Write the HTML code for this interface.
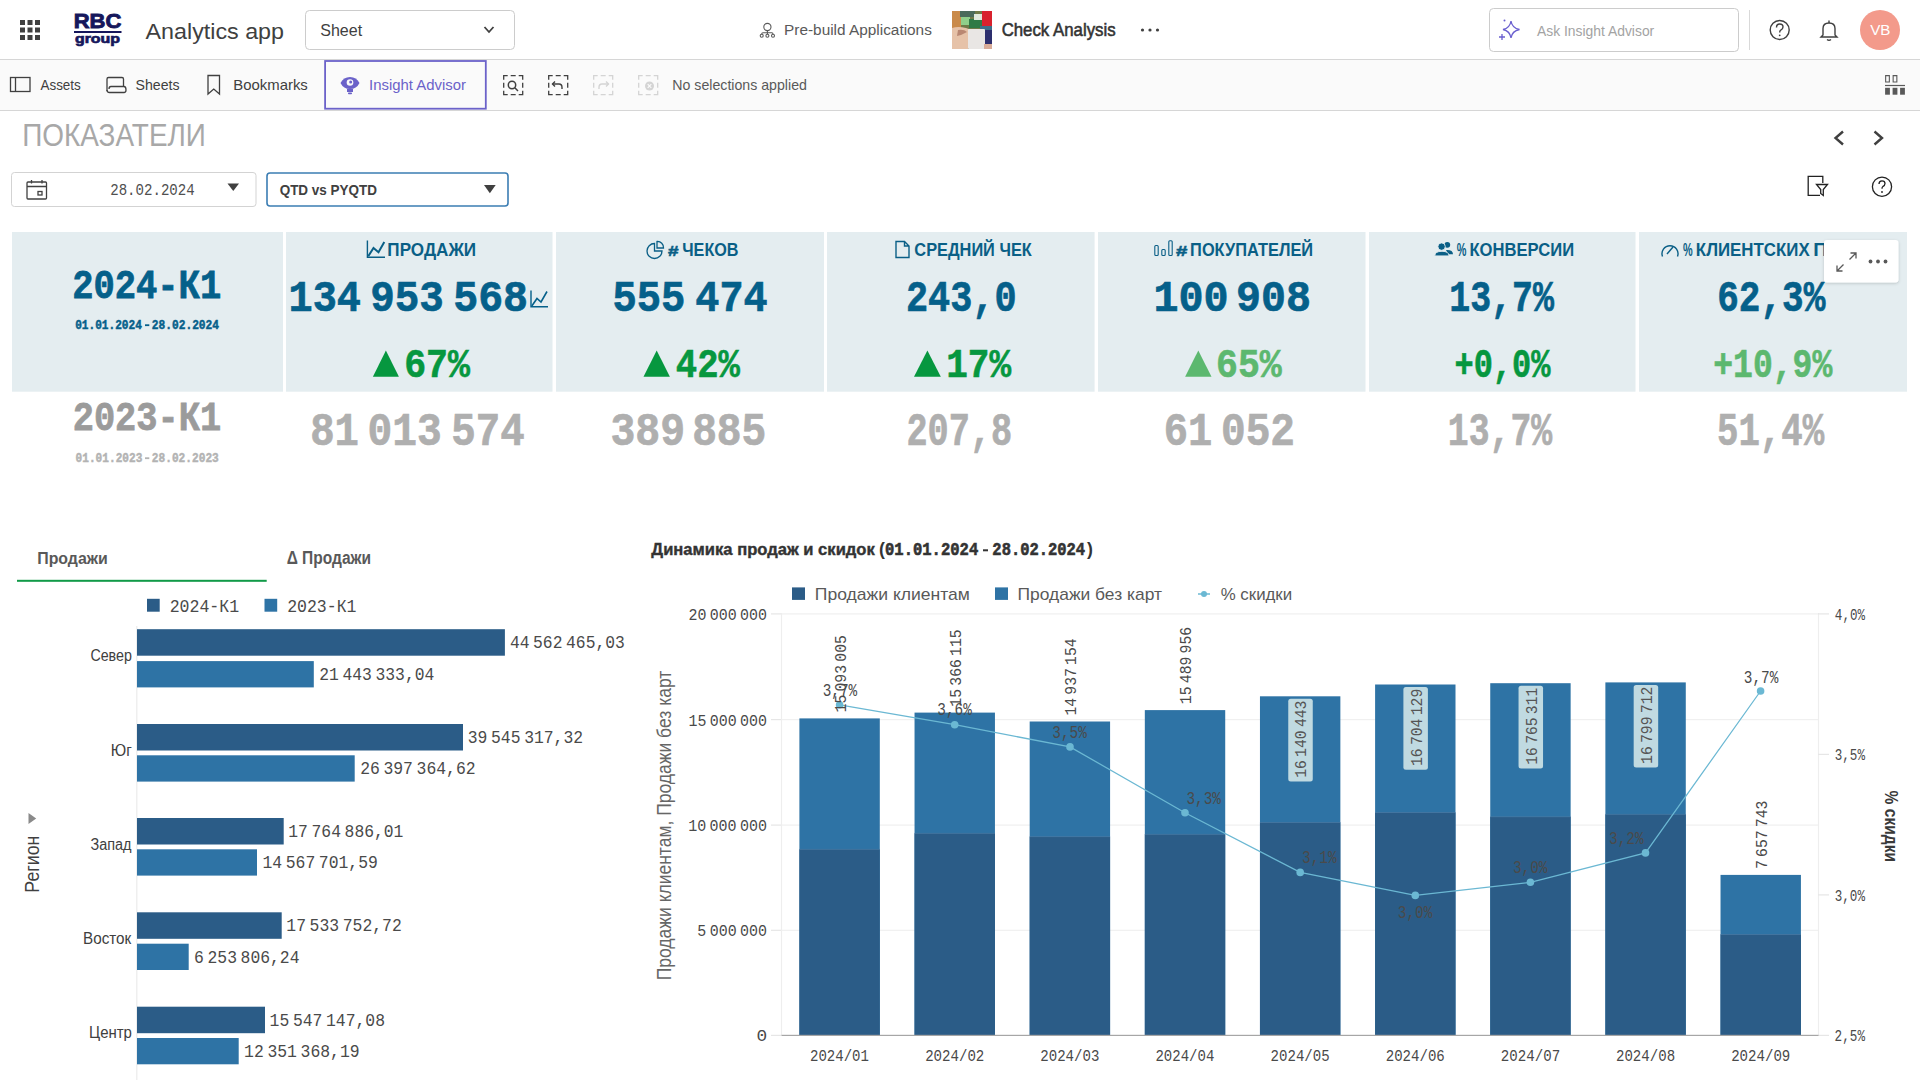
<!DOCTYPE html>
<html><head><meta charset="utf-8"><title>Analytics app</title>
<style>
*{margin:0;padding:0;box-sizing:border-box}
html,body{width:1920px;height:1080px;overflow:hidden;background:#fff;font-family:"Liberation Sans",sans-serif}
svg{position:absolute;left:0;top:0;display:block}
text{white-space:pre}
</style></head><body>
<svg width="1920" height="1080" viewBox="0 0 1920 1080">
<rect x="0" y="0" width="1920" height="59" fill="#fff"/>
<rect x="0" y="59" width="1920" height="1" fill="#d6d6d6"/>
<rect x="0" y="60" width="1920" height="50" fill="#fafafa"/>
<rect x="0" y="110" width="1920" height="1" fill="#d6d6d6"/>
<rect x="20.0" y="20.0" width="5" height="5" fill="#404040"/>
<rect x="20.0" y="27.5" width="5" height="5" fill="#404040"/>
<rect x="20.0" y="35.0" width="5" height="5" fill="#404040"/>
<rect x="27.5" y="20.0" width="5" height="5" fill="#404040"/>
<rect x="27.5" y="27.5" width="5" height="5" fill="#404040"/>
<rect x="27.5" y="35.0" width="5" height="5" fill="#404040"/>
<rect x="35.0" y="20.0" width="5" height="5" fill="#404040"/>
<rect x="35.0" y="27.5" width="5" height="5" fill="#404040"/>
<rect x="35.0" y="35.0" width="5" height="5" fill="#404040"/>
<text x="73.73" y="28.40" font-family="Liberation Sans" font-weight="bold" font-size="21.08" fill="#16175c" textLength="47.67" lengthAdjust="spacingAndGlyphs" stroke="#16175c" stroke-width="0.9">RBC</text>
<rect x="74" y="31" width="47.5" height="2" fill="#16175c"/>
<text x="74.95" y="42.60" font-family="Liberation Sans" font-weight="bold" font-size="13.52" fill="#16175c" textLength="45.11" lengthAdjust="spacingAndGlyphs" stroke="#16175c" stroke-width="0.7">group</text>
<text x="145.55" y="38.75" font-family="Liberation Sans" font-weight="normal" font-size="22.75" fill="#404040" textLength="138.42" lengthAdjust="spacingAndGlyphs" >Analytics app</text>
<rect x="305.5" y="10.5" width="209" height="39" rx="4" fill="#fff" stroke="#cccccc"/>
<text x="320.27" y="35.80" font-family="Liberation Sans" font-weight="normal" font-size="15.84" fill="#404040" textLength="41.84" lengthAdjust="spacingAndGlyphs" >Sheet</text>
<path d="M484.5 27 L489 32 L493.5 27" stroke="#404040" stroke-width="1.8" fill="none"/>
<g fill="none" stroke="#595959" stroke-width="1.1"><circle cx="767.4" cy="27" r="3.6"/><path d="M767.4 30.6 V32.8 M761.7 34.2 Q761.7 32.8 763 32.8 H771.8 Q773 32.8 773 34.2 M767.4 32.8 V34.2"/><circle cx="761.7" cy="35.7" r="1.5"/><circle cx="767.4" cy="35.7" r="1.5"/><circle cx="773" cy="35.7" r="1.5"/></g>
<text x="784.05" y="34.75" font-family="Liberation Sans" font-weight="normal" font-size="14.03" fill="#595959" textLength="147.81" lengthAdjust="spacingAndGlyphs" >Pre-build Applications</text>
<clipPath id="thc"><rect x="952" y="11" width="40" height="38"/></clipPath>
<g clip-path="url(#thc)"><rect x="952" y="11" width="40" height="38" fill="#6f7a48"/><rect x="952" y="11" width="9" height="17" fill="#c98a4a"/><rect x="960" y="11" width="15" height="6" fill="#4a6a5a"/><rect x="961" y="17" width="9" height="8" fill="#8fcf8a"/><rect x="969" y="19" width="13" height="9" fill="#2f7a45"/><rect x="974" y="14" width="8" height="6" fill="#dfe8dc"/><rect x="982" y="11" width="10" height="17" fill="#d8222e"/><rect x="980" y="26" width="12" height="6" fill="#3d6f8a"/><rect x="984" y="30" width="8" height="15" fill="#2d2f6e"/><rect x="952" y="43" width="10" height="6" fill="#2e8a35"/><path d="M952 28 Q958 26 966 28 Q974 30 974 36 L968 49 H952 Z" fill="#e6c2a8"/><rect x="968" y="29" width="17" height="20" rx="1" fill="#e9e6e4"/><path d="M958 30 Q964 29 967 32 Q962 35 957 36 Z" fill="#b98772"/><rect x="984" y="44" width="8" height="5" fill="#d8ab98"/></g>
<text x="1001.65" y="35.90" font-family="Liberation Sans" font-weight="normal" font-size="18.17" fill="#333333" textLength="113.95" lengthAdjust="spacingAndGlyphs" stroke="#333333" stroke-width="0.55">Check Analysis</text>
<circle cx="1142.5" cy="30" r="1.6" fill="#404040"/>
<circle cx="1150" cy="30" r="1.6" fill="#404040"/>
<circle cx="1157.5" cy="30" r="1.6" fill="#404040"/>
<rect x="1489.5" y="8.5" width="249" height="43" rx="4" fill="#fff" stroke="#cccccc"/>
<g fill="none" stroke="#6a5fcf" stroke-width="1.3"><path d="M1511 21 Q1512 28 1519.5 29.5 Q1512 31 1511 38 Q1510 31 1503 29.5 Q1510 28 1511 21 Z"/><path d="M1502 34 V40 M1499 37 H1505"/></g><circle cx="1504.5" cy="20.5" r="1" fill="#6a5fcf"/>
<text x="1536.97" y="35.90" font-family="Liberation Sans" font-weight="normal" font-size="14.54" fill="#a3a3a3" textLength="117.26" lengthAdjust="spacingAndGlyphs" >Ask Insight Advisor</text>
<rect x="1749" y="10" width="1" height="40" fill="#d9d9d9"/>
<g fill="none" stroke="#404040" stroke-width="1.4"><circle cx="1779.7" cy="30" r="9.5"/><path d="M1776.5 27.5 Q1776.5 24 1779.7 24 Q1783 24 1783 27 Q1783 29 1780.5 30.3 Q1779.7 30.8 1779.7 32.5"/></g><circle cx="1779.7" cy="35.3" r="0.9" fill="#404040"/>
<g fill="none" stroke="#404040" stroke-width="1.4"><path d="M1823 35 V28.5 Q1823 23 1829 23 Q1835 23 1835 28.5 V35 L1837 37 H1821 Z"/><path d="M1827 39.5 Q1829 41 1831 39.5"/><path d="M1829 20.5 V23"/></g>
<circle cx="1880" cy="30" r="20" fill="#f39a8b"/>
<text x="1870.23" y="34.80" font-family="Liberation Sans" font-weight="normal" font-size="14.39" fill="#ffffff" textLength="20.27" lengthAdjust="spacingAndGlyphs" >VB</text>
<g fill="none" stroke="#404040" stroke-width="1.3"><rect x="10.5" y="77.5" width="19.5" height="14"/><path d="M15.5 77.5 V91.5"/></g>
<text x="40.47" y="89.80" font-family="Liberation Sans" font-weight="normal" font-size="14.54" fill="#404040" textLength="40.31" lengthAdjust="spacingAndGlyphs" >Assets</text>
<g fill="none" stroke="#404040" stroke-width="1.3"><path d="M107 91 V79 Q107 77.5 108.5 77.5 H122 Q123.5 77.5 123.5 79 V86"/><path d="M107 90 Q107 92.5 109.5 92.5 H124 Q126 92.5 126 90 Q126 86.5 124 86.5 H111 Q109 86.5 109 89"/></g>
<text x="135.56" y="89.80" font-family="Liberation Sans" font-weight="normal" font-size="14.54" fill="#404040" textLength="43.95" lengthAdjust="spacingAndGlyphs" >Sheets</text>
<path d="M208 75.5 H219.5 V94 L213.75 89 L208 94 Z" fill="none" stroke="#404040" stroke-width="1.3"/>
<text x="233.28" y="89.80" font-family="Liberation Sans" font-weight="normal" font-size="14.54" fill="#404040" textLength="74.56" lengthAdjust="spacingAndGlyphs" >Bookmarks</text>
<rect x="325.1" y="61" width="160.7" height="47.7" fill="none" stroke="#6b62c9" stroke-width="1.8"/>
<path d="M350 77 Q343.5 77 340.5 83 Q343.5 89 350 89 Q356.5 89 359.5 83 Q356.5 77 350 77 Z" fill="#6b62c9"/><circle cx="350" cy="82.5" r="3.3" fill="#fafafa"/><circle cx="350.7" cy="82" r="1.5" fill="#6b62c9"/><rect x="347" y="89" width="6" height="3" fill="#6b62c9"/><rect x="348" y="92.5" width="4" height="1.8" rx="0.8" fill="#6b62c9"/>
<text x="369.14" y="89.80" font-family="Liberation Sans" font-weight="normal" font-size="14.54" fill="#6b62c9" textLength="96.81" lengthAdjust="spacingAndGlyphs" >Insight Advisor</text>
<rect x="503.7" y="75.7" width="19" height="19" fill="none" stroke="#404040" stroke-width="1.3" stroke-dasharray="8 3 5 3" stroke-dashoffset="4"/>
<g fill="none" stroke="#404040" stroke-width="1.5"><circle cx="512" cy="85" r="3.7"/><path d="M514.8 87.8 L518 91"/></g>
<rect x="548.7" y="75.7" width="19" height="19" fill="none" stroke="#404040" stroke-width="1.3" stroke-dasharray="8 3 5 3" stroke-dashoffset="4"/>
<g fill="none" stroke="#404040" stroke-width="1.4"><path d="M555 81.5 L552.5 84 L555 86.5"/><path d="M552.5 84 H559 Q562 84 562 87.5 V89"/></g>
<rect x="593.7" y="75.7" width="19" height="19" fill="none" stroke="#d4d4d4" stroke-width="1.3" stroke-dasharray="8 3 5 3" stroke-dashoffset="4"/>
<g fill="none" stroke="#d4d4d4" stroke-width="1.4"><path d="M606 81.5 L608.5 84 L606 86.5"/><path d="M608.5 84 H602 Q599 84 599 87.5 V89"/></g>
<rect x="638.7" y="75.7" width="19" height="19" fill="none" stroke="#d4d4d4" stroke-width="1.3" stroke-dasharray="8 3 5 3" stroke-dashoffset="4"/>
<circle cx="649.5" cy="86" r="4.5" fill="#d4d4d4"/><path d="M647.7 84.2 L651.3 87.8 M651.3 84.2 L647.7 87.8" stroke="#fafafa" stroke-width="1.2"/>
<text x="672.34" y="89.80" font-family="Liberation Sans" font-weight="normal" font-size="14.54" fill="#595959" textLength="134.57" lengthAdjust="spacingAndGlyphs" >No selections applied</text>
<g fill="#595959"><path fill-rule="evenodd" d="M1885.1 75.1 H1889.9 V82.5 H1885.1 Z M1886.2 76.2 V81.4 H1888.8 V76.2 Z M1892.6 75.1 H1897.4 V82.5 H1892.6 Z M1893.7 76.2 V81.4 H1896.3 V76.2 Z"/><rect x="1885" y="84.9" width="20" height="1.2"/><rect x="1885.1" y="87.8" width="4.8" height="6.9"/><rect x="1892.6" y="87.8" width="4.8" height="6.9"/><rect x="1900.1" y="87.8" width="4.8" height="6.9"/></g>
<text x="22.17" y="145.90" font-family="Liberation Sans" font-weight="normal" font-size="31.11" fill="#a8a8a8" textLength="183.79" lengthAdjust="spacingAndGlyphs" >ПОКАЗАТЕЛИ</text>
<path d="M1843 131.5 L1835.5 138 L1843 144.5" fill="none" stroke="#404040" stroke-width="2.4"/>
<path d="M1874.5 131.5 L1882 138 L1874.5 144.5" fill="none" stroke="#404040" stroke-width="2.4"/>
<rect x="11.5" y="172.5" width="244.5" height="34" rx="3" fill="#fff" stroke="#d3d3d3"/>
<g fill="none" stroke="#404040" stroke-width="1.3"><rect x="27" y="182" width="19.5" height="17" rx="1"/><path d="M27 186.5 H46.5 M31.5 180 V183.5 M42 180 V183.5"/><rect x="38" y="191.5" width="4" height="3.5"/></g>
<text x="110.21" y="194.70" font-family="Liberation Mono" font-weight="normal" font-size="17.31" fill="#505050" textLength="84.51" lengthAdjust="spacingAndGlyphs" >28.02.2024</text>
<path d="M227.5 183.5 H239 L233.25 191 Z" fill="#404040"/>
<rect x="267" y="173" width="241" height="33" rx="3" fill="#fff" stroke="#3b7db3" stroke-width="1.6"/>
<text x="279.65" y="195.40" font-family="Liberation Sans" font-weight="bold" font-size="14.83" fill="#404040" textLength="97.42" lengthAdjust="spacingAndGlyphs" >QTD vs PYQTD</text>
<path d="M484 185 H495.7 L489.85 193.3 Z" fill="#404040"/>
<g fill="none" stroke="#222" stroke-width="1.3"><path d="M1820 195.3 H1808.2 V176.4 H1822.8 V183"/><path d="M1816.5 184.5 H1827.5 L1823.3 189.5 V195.5 L1820.7 193.5 V189.5 Z"/></g>
<g fill="none" stroke="#222" stroke-width="1.3"><circle cx="1882" cy="186.7" r="9.6"/><path d="M1879 184 Q1879 180.8 1882 180.8 Q1885 180.8 1885 183.6 Q1885 185.5 1882.7 186.7 Q1882 187.2 1882 188.8"/></g><circle cx="1882" cy="192" r="0.9" fill="#222"/>
<rect x="12" y="232" width="271.0" height="159.7" fill="#e4edf0"/>
<rect x="286" y="232" width="266.5" height="159.7" fill="#e4edf0"/>
<rect x="556" y="232" width="268.0" height="159.7" fill="#e4edf0"/>
<rect x="827" y="232" width="267.6" height="159.7" fill="#e4edf0"/>
<rect x="1098" y="232" width="267.5" height="159.7" fill="#e4edf0"/>
<rect x="1369" y="232" width="266.5" height="159.7" fill="#e4edf0"/>
<rect x="1639" y="232" width="268.0" height="159.7" fill="#e4edf0"/>
<text x="72.17" y="298.00" font-family="Liberation Mono" font-weight="bold" font-size="40.53" fill="#05608a" textLength="149.04" lengthAdjust="spacingAndGlyphs" stroke="#05608a" stroke-width="0.8">2024-К1</text>
<text x="75.17" y="329.00" font-family="Liberation Mono" font-weight="bold" font-size="13.66" fill="#05608a" textLength="66.67" lengthAdjust="spacingAndGlyphs" stroke="#05608a" stroke-width="0.5">01.01.2024</text>
<rect x="145" y="324.3" width="4.3" height="1.8" fill="#05608a"/>
<text x="151.83" y="329.00" font-family="Liberation Mono" font-weight="bold" font-size="13.66" fill="#05608a" textLength="67.21" lengthAdjust="spacingAndGlyphs" stroke="#05608a" stroke-width="0.5">28.02.2024</text>
<text x="72.68" y="430.00" font-family="Liberation Mono" font-weight="bold" font-size="40.53" fill="#9b9b9b" textLength="148.53" lengthAdjust="spacingAndGlyphs" stroke="#9b9b9b" stroke-width="0.8">2023-К1</text>
<text x="75.62" y="462.00" font-family="Liberation Mono" font-weight="bold" font-size="13.66" fill="#b3b3b3" textLength="66.70" lengthAdjust="spacingAndGlyphs" stroke="#b3b3b3" stroke-width="0.5">01.01.2023</text>
<rect x="145" y="457.3" width="4.3" height="1.8" fill="#b3b3b3"/>
<text x="151.83" y="462.00" font-family="Liberation Mono" font-weight="bold" font-size="13.66" fill="#b3b3b3" textLength="66.99" lengthAdjust="spacingAndGlyphs" stroke="#b3b3b3" stroke-width="0.5">28.02.2023</text>
<text x="387.36" y="256.20" font-family="Liberation Sans" font-weight="bold" font-size="18.75" fill="#0a5f86" textLength="88.78" lengthAdjust="spacingAndGlyphs" >ПРОДАЖИ</text>
<text x="667.98" y="256.00" font-family="Liberation Sans" font-weight="bold" font-size="14.24" fill="#0a5f86" textLength="10.53" lengthAdjust="spacingAndGlyphs" stroke="#0a5f86" stroke-width="0.5">#</text>
<text x="682.23" y="256.20" font-family="Liberation Sans" font-weight="bold" font-size="18.75" fill="#0a5f86" textLength="56.30" lengthAdjust="spacingAndGlyphs" >ЧЕКОВ</text>
<text x="914.33" y="256.20" font-family="Liberation Sans" font-weight="bold" font-size="18.75" fill="#0a5f86" textLength="117.45" lengthAdjust="spacingAndGlyphs" >СРЕДНИЙ ЧЕК</text>
<text x="1176.05" y="255.80" font-family="Liberation Sans" font-weight="bold" font-size="14.83" fill="#0a5f86" textLength="11.38" lengthAdjust="spacingAndGlyphs" stroke="#0a5f86" stroke-width="0.5">#</text>
<text x="1190.11" y="256.20" font-family="Liberation Sans" font-weight="bold" font-size="18.75" fill="#0a5f86" textLength="122.98" lengthAdjust="spacingAndGlyphs" >ПОКУПАТЕЛЕЙ</text>
<text x="1456.73" y="256.20" font-family="Liberation Sans" font-weight="bold" font-size="18.75" fill="#0a5f86" textLength="9.66" lengthAdjust="spacingAndGlyphs" >%</text>
<text x="1469.49" y="256.20" font-family="Liberation Sans" font-weight="bold" font-size="18.75" fill="#0a5f86" textLength="104.61" lengthAdjust="spacingAndGlyphs" >КОНВЕРСИИ</text>
<text x="1683.03" y="256.20" font-family="Liberation Sans" font-weight="bold" font-size="18.75" fill="#0a5f86" textLength="9.66" lengthAdjust="spacingAndGlyphs" >%</text>
<text x="1695.87" y="256.20" font-family="Liberation Sans" font-weight="bold" font-size="18.75" fill="#0a5f86" textLength="113.78" lengthAdjust="spacingAndGlyphs" >КЛИЕНТСКИХ</text>
<text x="1813.18" y="256.20" font-family="Liberation Sans" font-weight="bold" font-size="18.75" fill="#0a5f86" textLength="14.13" lengthAdjust="spacingAndGlyphs" >П</text>
<g fill="none" stroke="#0a5f86"><path d="M367.4 240.5 V257.2 H385" stroke-width="1.4"/><path d="M368.2 256.3 L373.5 248 L378.5 252.3 L384.3 242" stroke-width="2"/></g>
<g fill="none" stroke="#0a5f86" stroke-width="1.3"><path d="M654.5 243.5 A7.5 7.5 0 1 0 662 251 H654.5 Z"/><path d="M657 241.5 A6 6 0 0 1 663.5 248 H657 Z"/></g>
<path d="M896 241.5 H904.5 L909 246 V257.5 H896 Z M904.5 241.5 V246 H909" fill="none" stroke="#0a5f86" stroke-width="1.4"/>
<g fill="none" stroke="#0a5f86" stroke-width="1.1"><rect x="1154.8" y="245.5" width="3.4" height="10" rx="1"/><rect x="1161.8" y="249.5" width="3.4" height="6" rx="1"/><rect x="1168.8" y="240.8" width="3.4" height="14.7" rx="1"/></g>
<g fill="#0a5f86"><circle cx="1447.3" cy="244.8" r="2.9"/><path d="M1446 250 Q1453 249.5 1453 254.3 H1448 Z"/><circle cx="1441.6" cy="246.6" r="3.7" stroke="#e4edf0" stroke-width="0.9"/><path d="M1434.8 255.9 Q1434.8 251.3 1442 251.3 Q1449 251.3 1449 255.9 Z" stroke="#e4edf0" stroke-width="0.9"/></g>
<g fill="none" stroke="#0a5f86" stroke-width="1.4"><path d="M1662.5 256.5 A8 8 0 1 1 1677.5 256.5"/><path d="M1667 254 L1673 247"/></g>
<text x="288.54" y="310.95" font-family="Liberation Mono" font-weight="bold" font-size="45.09" fill="#05608a" textLength="72.51" lengthAdjust="spacingAndGlyphs" stroke="#05608a" stroke-width="0.7">134</text>
<text x="370.27" y="310.95" font-family="Liberation Mono" font-weight="bold" font-size="45.09" fill="#05608a" textLength="73.65" lengthAdjust="spacingAndGlyphs" stroke="#05608a" stroke-width="0.7">953</text>
<text x="453.24" y="310.95" font-family="Liberation Mono" font-weight="bold" font-size="45.09" fill="#05608a" textLength="74.82" lengthAdjust="spacingAndGlyphs" stroke="#05608a" stroke-width="0.7">568</text>
<g fill="none" stroke="#05608a" stroke-width="1.4"><path d="M531 290.5 V306.8 H548"/><path d="M531.8 306 L537 298.5 L541 302 L547 291.5" stroke-width="1.6"/></g>
<text x="612.50" y="310.95" font-family="Liberation Mono" font-weight="bold" font-size="45.09" fill="#05608a" textLength="72.85" lengthAdjust="spacingAndGlyphs" stroke="#05608a" stroke-width="0.7">555</text>
<text x="695.26" y="310.95" font-family="Liberation Mono" font-weight="bold" font-size="45.09" fill="#05608a" textLength="72.39" lengthAdjust="spacingAndGlyphs" stroke="#05608a" stroke-width="0.7">474</text>
<text x="905.94" y="310.95" font-family="Liberation Mono" font-weight="bold" font-size="45.09" fill="#05608a" textLength="110.64" lengthAdjust="spacingAndGlyphs" stroke="#05608a" stroke-width="0.7">243,0</text>
<text x="1153.54" y="310.95" font-family="Liberation Mono" font-weight="bold" font-size="45.09" fill="#05608a" textLength="75.12" lengthAdjust="spacingAndGlyphs" stroke="#05608a" stroke-width="0.7">100</text>
<text x="1236.03" y="310.95" font-family="Liberation Mono" font-weight="bold" font-size="45.09" fill="#05608a" textLength="74.93" lengthAdjust="spacingAndGlyphs" stroke="#05608a" stroke-width="0.7">908</text>
<text x="1449.20" y="310.95" font-family="Liberation Mono" font-weight="bold" font-size="45.09" fill="#05608a" textLength="104.74" lengthAdjust="spacingAndGlyphs" stroke="#05608a" stroke-width="0.7">13,7%</text>
<text x="1717.15" y="310.95" font-family="Liberation Mono" font-weight="bold" font-size="45.09" fill="#05608a" textLength="108.18" lengthAdjust="spacingAndGlyphs" stroke="#05608a" stroke-width="0.7">62,3%</text>
<path d="M372.9 376.8 L385.90 350.6 L398.9 376.8 Z" fill="#06973f"/>
<text x="404.17" y="376.50" font-family="Liberation Mono" font-weight="bold" font-size="39.78" fill="#06973f" textLength="65.81" lengthAdjust="spacingAndGlyphs" stroke="#06973f" stroke-width="0.6">67%</text>
<path d="M643.5 376.8 L656.70 350.6 L669.9 376.8 Z" fill="#06973f"/>
<text x="675.87" y="376.50" font-family="Liberation Mono" font-weight="bold" font-size="39.78" fill="#06973f" textLength="64.12" lengthAdjust="spacingAndGlyphs" stroke="#06973f" stroke-width="0.6">42%</text>
<path d="M914 376.8 L927.40 350.6 L940.8 376.8 Z" fill="#06973f"/>
<text x="946.17" y="376.50" font-family="Liberation Mono" font-weight="bold" font-size="39.78" fill="#06973f" textLength="64.91" lengthAdjust="spacingAndGlyphs" stroke="#06973f" stroke-width="0.6">17%</text>
<path d="M1185.1 376.8 L1198.30 350.6 L1211.5 376.8 Z" fill="#5cb86f"/>
<text x="1216.07" y="376.50" font-family="Liberation Mono" font-weight="bold" font-size="39.78" fill="#5cb86f" textLength="65.71" lengthAdjust="spacingAndGlyphs" stroke="#5cb86f" stroke-width="0.6">65%</text>
<text x="1454.52" y="376.50" font-family="Liberation Mono" font-weight="bold" font-size="39.78" fill="#06973f" textLength="95.86" lengthAdjust="spacingAndGlyphs" stroke="#06973f" stroke-width="0.6">+0,0%</text>
<text x="1713.27" y="376.50" font-family="Liberation Mono" font-weight="bold" font-size="39.78" fill="#5cb86f" textLength="119.01" lengthAdjust="spacingAndGlyphs" stroke="#5cb86f" stroke-width="0.6">+10,9%</text>
<text x="310.19" y="444.65" font-family="Liberation Mono" font-weight="bold" font-size="45.70" fill="#afafaf" textLength="48.68" lengthAdjust="spacingAndGlyphs" stroke="#afafaf" stroke-width="0.7">81</text>
<text x="367.49" y="444.65" font-family="Liberation Mono" font-weight="bold" font-size="45.70" fill="#afafaf" textLength="74.25" lengthAdjust="spacingAndGlyphs" stroke="#afafaf" stroke-width="0.7">013</text>
<text x="451.28" y="444.65" font-family="Liberation Mono" font-weight="bold" font-size="45.70" fill="#afafaf" textLength="73.33" lengthAdjust="spacingAndGlyphs" stroke="#afafaf" stroke-width="0.7">574</text>
<text x="610.47" y="444.65" font-family="Liberation Mono" font-weight="bold" font-size="45.70" fill="#afafaf" textLength="74.67" lengthAdjust="spacingAndGlyphs" stroke="#afafaf" stroke-width="0.7">389</text>
<text x="692.16" y="444.65" font-family="Liberation Mono" font-weight="bold" font-size="45.70" fill="#afafaf" textLength="74.12" lengthAdjust="spacingAndGlyphs" stroke="#afafaf" stroke-width="0.7">885</text>
<text x="906.43" y="444.65" font-family="Liberation Mono" font-weight="bold" font-size="45.70" fill="#afafaf" textLength="105.79" lengthAdjust="spacingAndGlyphs" stroke="#afafaf" stroke-width="0.7">207,8</text>
<text x="1163.78" y="444.65" font-family="Liberation Mono" font-weight="bold" font-size="45.70" fill="#afafaf" textLength="48.59" lengthAdjust="spacingAndGlyphs" stroke="#afafaf" stroke-width="0.7">61</text>
<text x="1221.00" y="444.65" font-family="Liberation Mono" font-weight="bold" font-size="45.70" fill="#afafaf" textLength="74.06" lengthAdjust="spacingAndGlyphs" stroke="#afafaf" stroke-width="0.7">052</text>
<text x="1447.81" y="444.65" font-family="Liberation Mono" font-weight="bold" font-size="45.70" fill="#afafaf" textLength="104.33" lengthAdjust="spacingAndGlyphs" stroke="#afafaf" stroke-width="0.7">13,7%</text>
<text x="1717.04" y="444.65" font-family="Liberation Mono" font-weight="bold" font-size="45.70" fill="#afafaf" textLength="107.10" lengthAdjust="spacingAndGlyphs" stroke="#afafaf" stroke-width="0.7">51,4%</text>
<defs><filter id="sh" x="-20%" y="-20%" width="140%" height="160%"><feDropShadow dx="0" dy="1" stdDeviation="1.5" flood-color="#000" flood-opacity="0.18"/></filter></defs>
<rect x="1824" y="240" width="74.5" height="42.5" rx="3" fill="#fff" filter="url(#sh)"/>
<g fill="none" stroke="#595959" stroke-width="1.3"><path d="M1837 271 L1843.5 264.5 M1837 265.5 V271 H1842.5"/><path d="M1856 253 L1849.5 259.5 M1850.5 253 H1856 V258.5"/></g>
<circle cx="1870.5" cy="261.5" r="1.9" fill="#595959"/>
<circle cx="1878" cy="261.5" r="1.9" fill="#595959"/>
<circle cx="1885.5" cy="261.5" r="1.9" fill="#595959"/>
<text x="37.24" y="564.20" font-family="Liberation Sans" font-weight="bold" font-size="17.01" fill="#595959" textLength="70.56" lengthAdjust="spacingAndGlyphs" >Продажи</text>
<text x="286.67" y="564.30" font-family="Liberation Sans" font-weight="bold" font-size="17.44" fill="#595959" textLength="84.40" lengthAdjust="spacingAndGlyphs" >Δ Продажи</text>
<rect x="17" y="579.8" width="249.7" height="2" fill="#119a48"/>
<rect x="147" y="598.8" width="12.7" height="12.9" fill="#2b5c87"/>
<text x="169.64" y="612.20" font-family="Liberation Mono" font-weight="normal" font-size="18.98" fill="#4a4a4a" textLength="69.46" lengthAdjust="spacingAndGlyphs" >2024-К1</text>
<rect x="264.5" y="598.8" width="12.7" height="12.9" fill="#2e73a5"/>
<text x="287.14" y="612.20" font-family="Liberation Mono" font-weight="normal" font-size="18.98" fill="#4a4a4a" textLength="69.36" lengthAdjust="spacingAndGlyphs" >2023-К1</text>
<rect x="136.2" y="626" width="1.2" height="454" fill="#ececec"/>
<rect x="137" y="629.2" width="367.9" height="26.5" fill="#2b5c87"/>
<rect x="137" y="661.1" width="176.8" height="26.3" fill="#2e73a5"/>
<text x="509.88" y="648.20" font-family="Liberation Mono" font-weight="normal" font-size="18.52" fill="#4a4a4a" textLength="19.59" lengthAdjust="spacingAndGlyphs" >44</text>
<text x="533.09" y="648.20" font-family="Liberation Mono" font-weight="normal" font-size="18.52" fill="#4a4a4a" textLength="29.38" lengthAdjust="spacingAndGlyphs" >562</text>
<text x="566.09" y="648.20" font-family="Liberation Mono" font-weight="normal" font-size="18.52" fill="#4a4a4a" textLength="58.76" lengthAdjust="spacingAndGlyphs" >465,03</text>
<text x="319.25" y="679.90" font-family="Liberation Mono" font-weight="normal" font-size="19.28" fill="#4a4a4a" textLength="19.61" lengthAdjust="spacingAndGlyphs" >21</text>
<text x="342.49" y="679.90" font-family="Liberation Mono" font-weight="normal" font-size="19.28" fill="#4a4a4a" textLength="29.41" lengthAdjust="spacingAndGlyphs" >443</text>
<text x="375.53" y="679.90" font-family="Liberation Mono" font-weight="normal" font-size="19.28" fill="#4a4a4a" textLength="58.82" lengthAdjust="spacingAndGlyphs" >333,04</text>
<text x="90.38" y="660.90" font-family="Liberation Sans" font-weight="normal" font-size="15.84" fill="#404040" textLength="41.52" lengthAdjust="spacingAndGlyphs" >Север</text>
<rect x="137" y="724.0" width="326.0" height="26.5" fill="#2b5c87"/>
<rect x="137" y="755.3" width="217.7" height="26.3" fill="#2e73a5"/>
<text x="467.78" y="743.00" font-family="Liberation Mono" font-weight="normal" font-size="18.52" fill="#4a4a4a" textLength="19.64" lengthAdjust="spacingAndGlyphs" >39</text>
<text x="491.05" y="743.00" font-family="Liberation Mono" font-weight="normal" font-size="18.52" fill="#4a4a4a" textLength="29.46" lengthAdjust="spacingAndGlyphs" >545</text>
<text x="524.15" y="743.00" font-family="Liberation Mono" font-weight="normal" font-size="18.52" fill="#4a4a4a" textLength="58.93" lengthAdjust="spacingAndGlyphs" >317,32</text>
<text x="360.15" y="774.10" font-family="Liberation Mono" font-weight="normal" font-size="19.28" fill="#4a4a4a" textLength="19.66" lengthAdjust="spacingAndGlyphs" >26</text>
<text x="383.45" y="774.10" font-family="Liberation Mono" font-weight="normal" font-size="19.28" fill="#4a4a4a" textLength="29.50" lengthAdjust="spacingAndGlyphs" >397</text>
<text x="416.59" y="774.10" font-family="Liberation Mono" font-weight="normal" font-size="19.28" fill="#4a4a4a" textLength="58.99" lengthAdjust="spacingAndGlyphs" >364,62</text>
<text x="110.75" y="755.70" font-family="Liberation Sans" font-weight="normal" font-size="15.84" fill="#404040" textLength="21.00" lengthAdjust="spacingAndGlyphs" >Юг</text>
<rect x="137" y="818.0" width="146.7" height="26.5" fill="#2b5c87"/>
<rect x="137" y="849.3" width="120.0" height="26.3" fill="#2e73a5"/>
<text x="288.32" y="837.00" font-family="Liberation Mono" font-weight="normal" font-size="18.52" fill="#4a4a4a" textLength="19.61" lengthAdjust="spacingAndGlyphs" >17</text>
<text x="311.55" y="837.00" font-family="Liberation Mono" font-weight="normal" font-size="18.52" fill="#4a4a4a" textLength="29.41" lengthAdjust="spacingAndGlyphs" >764</text>
<text x="344.59" y="837.00" font-family="Liberation Mono" font-weight="normal" font-size="18.52" fill="#4a4a4a" textLength="58.82" lengthAdjust="spacingAndGlyphs" >886,01</text>
<text x="262.42" y="868.10" font-family="Liberation Mono" font-weight="normal" font-size="19.28" fill="#4a4a4a" textLength="19.67" lengthAdjust="spacingAndGlyphs" >14</text>
<text x="285.72" y="868.10" font-family="Liberation Mono" font-weight="normal" font-size="19.28" fill="#4a4a4a" textLength="29.50" lengthAdjust="spacingAndGlyphs" >567</text>
<text x="318.86" y="868.10" font-family="Liberation Mono" font-weight="normal" font-size="19.28" fill="#4a4a4a" textLength="59.00" lengthAdjust="spacingAndGlyphs" >701,59</text>
<text x="90.53" y="849.70" font-family="Liberation Sans" font-weight="normal" font-size="15.84" fill="#404040" textLength="41.02" lengthAdjust="spacingAndGlyphs" >Запад</text>
<rect x="137" y="912.3" width="144.7" height="26.5" fill="#2b5c87"/>
<rect x="137" y="943.7" width="51.7" height="26.3" fill="#2e73a5"/>
<text x="286.32" y="931.30" font-family="Liberation Mono" font-weight="normal" font-size="18.52" fill="#4a4a4a" textLength="19.67" lengthAdjust="spacingAndGlyphs" >17</text>
<text x="309.62" y="931.30" font-family="Liberation Mono" font-weight="normal" font-size="18.52" fill="#4a4a4a" textLength="29.51" lengthAdjust="spacingAndGlyphs" >533</text>
<text x="342.77" y="931.30" font-family="Liberation Mono" font-weight="normal" font-size="18.52" fill="#4a4a4a" textLength="59.01" lengthAdjust="spacingAndGlyphs" >752,72</text>
<text x="194.09" y="962.50" font-family="Liberation Mono" font-weight="normal" font-size="19.28" fill="#4a4a4a" textLength="9.81" lengthAdjust="spacingAndGlyphs" >6</text>
<text x="207.54" y="962.50" font-family="Liberation Mono" font-weight="normal" font-size="19.28" fill="#4a4a4a" textLength="29.43" lengthAdjust="spacingAndGlyphs" >253</text>
<text x="240.60" y="962.50" font-family="Liberation Mono" font-weight="normal" font-size="19.28" fill="#4a4a4a" textLength="58.87" lengthAdjust="spacingAndGlyphs" >806,24</text>
<text x="83.06" y="944.00" font-family="Liberation Sans" font-weight="normal" font-size="15.84" fill="#404040" textLength="48.17" lengthAdjust="spacingAndGlyphs" >Восток</text>
<rect x="137" y="1006.7" width="128.0" height="26.5" fill="#2b5c87"/>
<rect x="137" y="1038.0" width="101.7" height="26.3" fill="#2e73a5"/>
<text x="269.62" y="1025.70" font-family="Liberation Mono" font-weight="normal" font-size="18.52" fill="#4a4a4a" textLength="19.66" lengthAdjust="spacingAndGlyphs" >15</text>
<text x="292.91" y="1025.70" font-family="Liberation Mono" font-weight="normal" font-size="18.52" fill="#4a4a4a" textLength="29.48" lengthAdjust="spacingAndGlyphs" >547</text>
<text x="326.03" y="1025.70" font-family="Liberation Mono" font-weight="normal" font-size="18.52" fill="#4a4a4a" textLength="58.97" lengthAdjust="spacingAndGlyphs" >147,08</text>
<text x="244.12" y="1056.80" font-family="Liberation Mono" font-weight="normal" font-size="19.28" fill="#4a4a4a" textLength="19.67" lengthAdjust="spacingAndGlyphs" >12</text>
<text x="267.42" y="1056.80" font-family="Liberation Mono" font-weight="normal" font-size="19.28" fill="#4a4a4a" textLength="29.50" lengthAdjust="spacingAndGlyphs" >351</text>
<text x="300.56" y="1056.80" font-family="Liberation Mono" font-weight="normal" font-size="19.28" fill="#4a4a4a" textLength="59.00" lengthAdjust="spacingAndGlyphs" >368,19</text>
<text x="89.07" y="1038.40" font-family="Liberation Sans" font-weight="normal" font-size="15.84" fill="#404040" textLength="42.86" lengthAdjust="spacingAndGlyphs" >Центр</text>
<path d="M28.5 813 L36.2 818.5 L28.5 824 Z" fill="#8a8a8a"/>
<g transform="translate(0,891.2) rotate(-90)"><text x="-1.44" y="39.20" font-family="Liberation Sans" font-weight="normal" font-size="20.20" fill="#404040" textLength="56.95" lengthAdjust="spacingAndGlyphs" >Регион</text></g>
<text x="651.35" y="554.70" font-family="Liberation Sans" font-weight="bold" font-size="17.30" fill="#333333" textLength="223.44" lengthAdjust="spacingAndGlyphs" stroke="#333333" stroke-width="0.4">Динамика продаж и скидок</text>
<text x="879.12" y="554.75" font-family="Liberation Sans" font-weight="bold" font-size="17.81" fill="#333333" textLength="5.90" lengthAdjust="spacingAndGlyphs" >(</text>
<text x="885.01" y="554.50" font-family="Liberation Mono" font-weight="bold" font-size="17.76" fill="#333333" textLength="93.25" lengthAdjust="spacingAndGlyphs" stroke="#333333" stroke-width="0.6">01.01.2024</text>
<rect x="983" y="549.3" width="5" height="2" fill="#333333"/>
<text x="992.37" y="554.50" font-family="Liberation Mono" font-weight="bold" font-size="17.76" fill="#333333" textLength="92.79" lengthAdjust="spacingAndGlyphs" stroke="#333333" stroke-width="0.6">28.02.2024</text>
<text x="1086.88" y="554.75" font-family="Liberation Sans" font-weight="bold" font-size="17.81" fill="#333333" textLength="5.90" lengthAdjust="spacingAndGlyphs" >)</text>
<rect x="792" y="587.4" width="13" height="12.5" fill="#2b5c87"/>
<text x="814.88" y="599.60" font-family="Liberation Sans" font-weight="normal" font-size="15.99" fill="#595959" textLength="155.02" lengthAdjust="spacingAndGlyphs" >Продажи клиентам</text>
<rect x="995" y="587.4" width="13" height="12.5" fill="#2e73a5"/>
<text x="1017.60" y="599.60" font-family="Liberation Sans" font-weight="normal" font-size="15.99" fill="#595959" textLength="144.30" lengthAdjust="spacingAndGlyphs" >Продажи без карт</text>
<path d="M1198 594 H1210" stroke="#6bb8d3" stroke-width="1.5"/><circle cx="1204" cy="594" r="3" fill="#6bb8d3"/>
<text x="1220.70" y="599.60" font-family="Liberation Sans" font-weight="normal" font-size="15.99" fill="#595959" textLength="71.47" lengthAdjust="spacingAndGlyphs" >% скидки</text>
<rect x="781.5" y="613.3" width="1037.0" height="1.2" fill="#f0f0f0"/>
<rect x="781.5" y="719.0" width="1037.0" height="1.2" fill="#f0f0f0"/>
<rect x="781.5" y="824.5" width="1037.0" height="1.2" fill="#f0f0f0"/>
<rect x="781.5" y="929.7" width="1037.0" height="1.2" fill="#f0f0f0"/>
<rect x="771" y="613.3" width="10.5" height="1.2" fill="#e6e6e6"/>
<rect x="771" y="719.0" width="10.5" height="1.2" fill="#e6e6e6"/>
<rect x="771" y="824.5" width="10.5" height="1.2" fill="#e6e6e6"/>
<rect x="771" y="929.7" width="10.5" height="1.2" fill="#e6e6e6"/>
<rect x="771" y="1034.8" width="10.5" height="1.2" fill="#e6e6e6"/>
<rect x="780.9" y="613" width="1.2" height="422" fill="#eeeeee"/>
<rect x="1817.9" y="613" width="1.2" height="422" fill="#eeeeee"/>
<rect x="1818" y="613.3" width="11" height="1.2" fill="#e6e6e6"/>
<rect x="1818" y="753.8" width="11" height="1.2" fill="#e6e6e6"/>
<rect x="1818" y="894.3" width="11" height="1.2" fill="#e6e6e6"/>
<rect x="1818" y="1034.8" width="11" height="1.2" fill="#e6e6e6"/>
<text x="688.55" y="619.80" font-family="Liberation Mono" font-weight="normal" font-size="16.55" fill="#4a4a4a" textLength="17.93" lengthAdjust="spacingAndGlyphs" >20</text>
<text x="709.80" y="619.80" font-family="Liberation Mono" font-weight="normal" font-size="16.55" fill="#4a4a4a" textLength="26.90" lengthAdjust="spacingAndGlyphs" >000</text>
<text x="740.02" y="619.80" font-family="Liberation Mono" font-weight="normal" font-size="16.55" fill="#4a4a4a" textLength="26.90" lengthAdjust="spacingAndGlyphs" >000</text>
<text x="688.52" y="725.50" font-family="Liberation Mono" font-weight="normal" font-size="16.55" fill="#4a4a4a" textLength="17.94" lengthAdjust="spacingAndGlyphs" >15</text>
<text x="709.78" y="725.50" font-family="Liberation Mono" font-weight="normal" font-size="16.55" fill="#4a4a4a" textLength="26.91" lengthAdjust="spacingAndGlyphs" >000</text>
<text x="740.01" y="725.50" font-family="Liberation Mono" font-weight="normal" font-size="16.55" fill="#4a4a4a" textLength="26.91" lengthAdjust="spacingAndGlyphs" >000</text>
<text x="688.22" y="831.00" font-family="Liberation Mono" font-weight="normal" font-size="16.55" fill="#4a4a4a" textLength="18.01" lengthAdjust="spacingAndGlyphs" >10</text>
<text x="709.56" y="831.00" font-family="Liberation Mono" font-weight="normal" font-size="16.55" fill="#4a4a4a" textLength="27.02" lengthAdjust="spacingAndGlyphs" >000</text>
<text x="739.91" y="831.00" font-family="Liberation Mono" font-weight="normal" font-size="16.55" fill="#4a4a4a" textLength="27.02" lengthAdjust="spacingAndGlyphs" >000</text>
<text x="697.36" y="936.20" font-family="Liberation Mono" font-weight="normal" font-size="16.55" fill="#4a4a4a" textLength="8.99" lengthAdjust="spacingAndGlyphs" >5</text>
<text x="709.68" y="936.20" font-family="Liberation Mono" font-weight="normal" font-size="16.55" fill="#4a4a4a" textLength="26.96" lengthAdjust="spacingAndGlyphs" >000</text>
<text x="739.96" y="936.20" font-family="Liberation Mono" font-weight="normal" font-size="16.55" fill="#4a4a4a" textLength="26.96" lengthAdjust="spacingAndGlyphs" >000</text>
<text x="756.42" y="1041.30" font-family="Liberation Mono" font-weight="normal" font-size="16.55" fill="#4a4a4a" textLength="10.67" lengthAdjust="spacingAndGlyphs" >0</text>
<text x="1834.87" y="619.80" font-family="Liberation Mono" font-weight="normal" font-size="16.40" fill="#4a4a4a" textLength="30.13" lengthAdjust="spacingAndGlyphs" >4,0%</text>
<text x="1834.71" y="760.30" font-family="Liberation Mono" font-weight="normal" font-size="16.40" fill="#4a4a4a" textLength="30.28" lengthAdjust="spacingAndGlyphs" >3,5%</text>
<text x="1834.71" y="900.80" font-family="Liberation Mono" font-weight="normal" font-size="16.40" fill="#4a4a4a" textLength="30.28" lengthAdjust="spacingAndGlyphs" >3,0%</text>
<text x="1834.61" y="1041.30" font-family="Liberation Mono" font-weight="normal" font-size="16.40" fill="#4a4a4a" textLength="30.38" lengthAdjust="spacingAndGlyphs" >2,5%</text>
<g transform="translate(0,978.9) rotate(-90)"><text x="-1.41" y="670.80" font-family="Liberation Sans" font-weight="normal" font-size="20.20" fill="#666666" textLength="309.61" lengthAdjust="spacingAndGlyphs" >Продажи клиентам, Продажи без карт</text></g>
<g transform="translate(0,790.9) rotate(90)"><text x="-0.39" y="-1885.00" font-family="Liberation Sans" font-weight="bold" font-size="18.02" fill="#3a3a3a" textLength="71.67" lengthAdjust="spacingAndGlyphs" >% скидки</text></g>
<rect x="799.40" y="718.4" width="80.4" height="316.90" fill="#2e73a5"/>
<rect x="799.40" y="849.3" width="80.4" height="186.00" fill="#2b5c87"/>
<rect x="799.40" y="848.90" width="80.4" height="0.8" fill="#5a86ad" opacity="0.6"/>
<text x="810.01" y="1061.20" font-family="Liberation Mono" font-weight="normal" font-size="16.85" fill="#4a4a4a" textLength="58.86" lengthAdjust="spacingAndGlyphs" >2024/01</text>
<rect x="914.54" y="712.6" width="80.4" height="322.70" fill="#2e73a5"/>
<rect x="914.54" y="833.3" width="80.4" height="202.00" fill="#2b5c87"/>
<rect x="914.54" y="832.90" width="80.4" height="0.8" fill="#5a86ad" opacity="0.6"/>
<text x="925.15" y="1061.20" font-family="Liberation Mono" font-weight="normal" font-size="16.85" fill="#4a4a4a" textLength="59.19" lengthAdjust="spacingAndGlyphs" >2024/02</text>
<rect x="1029.68" y="721.5" width="80.4" height="313.80" fill="#2e73a5"/>
<rect x="1029.68" y="836.7" width="80.4" height="198.60" fill="#2b5c87"/>
<rect x="1029.68" y="836.30" width="80.4" height="0.8" fill="#5a86ad" opacity="0.6"/>
<text x="1040.29" y="1061.20" font-family="Liberation Mono" font-weight="normal" font-size="16.85" fill="#4a4a4a" textLength="59.08" lengthAdjust="spacingAndGlyphs" >2024/03</text>
<rect x="1144.82" y="710.1" width="80.4" height="325.20" fill="#2e73a5"/>
<rect x="1144.82" y="834.3" width="80.4" height="201.00" fill="#2b5c87"/>
<rect x="1144.82" y="833.90" width="80.4" height="0.8" fill="#5a86ad" opacity="0.6"/>
<text x="1155.43" y="1061.20" font-family="Liberation Mono" font-weight="normal" font-size="16.85" fill="#4a4a4a" textLength="58.90" lengthAdjust="spacingAndGlyphs" >2024/04</text>
<rect x="1259.96" y="696.3" width="80.4" height="339.00" fill="#2e73a5"/>
<rect x="1259.96" y="822.4" width="80.4" height="212.90" fill="#2b5c87"/>
<rect x="1259.96" y="822.00" width="80.4" height="0.8" fill="#5a86ad" opacity="0.6"/>
<text x="1270.57" y="1061.20" font-family="Liberation Mono" font-weight="normal" font-size="16.85" fill="#4a4a4a" textLength="59.08" lengthAdjust="spacingAndGlyphs" >2024/05</text>
<rect x="1375.10" y="684.5" width="80.4" height="350.80" fill="#2e73a5"/>
<rect x="1375.10" y="812.5" width="80.4" height="222.80" fill="#2b5c87"/>
<rect x="1375.10" y="812.10" width="80.4" height="0.8" fill="#5a86ad" opacity="0.6"/>
<text x="1385.71" y="1061.20" font-family="Liberation Mono" font-weight="normal" font-size="16.85" fill="#4a4a4a" textLength="59.10" lengthAdjust="spacingAndGlyphs" >2024/06</text>
<rect x="1490.24" y="683.2" width="80.4" height="352.10" fill="#2e73a5"/>
<rect x="1490.24" y="816.8" width="80.4" height="218.50" fill="#2b5c87"/>
<rect x="1490.24" y="816.40" width="80.4" height="0.8" fill="#5a86ad" opacity="0.6"/>
<text x="1500.85" y="1061.20" font-family="Liberation Mono" font-weight="normal" font-size="16.85" fill="#4a4a4a" textLength="59.30" lengthAdjust="spacingAndGlyphs" >2024/07</text>
<rect x="1605.38" y="682.4" width="80.4" height="352.90" fill="#2e73a5"/>
<rect x="1605.38" y="814.3" width="80.4" height="221.00" fill="#2b5c87"/>
<rect x="1605.38" y="813.90" width="80.4" height="0.8" fill="#5a86ad" opacity="0.6"/>
<text x="1615.99" y="1061.20" font-family="Liberation Mono" font-weight="normal" font-size="16.85" fill="#4a4a4a" textLength="59.12" lengthAdjust="spacingAndGlyphs" >2024/08</text>
<rect x="1720.52" y="874.9" width="80.4" height="160.40" fill="#2e73a5"/>
<rect x="1720.52" y="934.4" width="80.4" height="100.90" fill="#2b5c87"/>
<rect x="1720.52" y="934.00" width="80.4" height="0.8" fill="#5a86ad" opacity="0.6"/>
<text x="1731.13" y="1061.20" font-family="Liberation Mono" font-weight="normal" font-size="16.85" fill="#4a4a4a" textLength="59.17" lengthAdjust="spacingAndGlyphs" >2024/09</text>
<rect x="781.5" y="1034.8" width="1037.0" height="1.2" fill="#a6a6a6"/>
<polyline points="839.6,704.8 954.7,724.7 1070,746.9 1185,812.7 1300.2,872.4 1415.3,895.4 1530.4,882.3 1645.5,852.9 1760.6,691" fill="none" stroke="#6bb8d3" stroke-width="1.25"/>
<circle cx="839.6" cy="704.8" r="3.8" fill="#6bb8d3"/>
<circle cx="954.7" cy="724.7" r="3.8" fill="#6bb8d3"/>
<circle cx="1070" cy="746.9" r="3.8" fill="#6bb8d3"/>
<circle cx="1185" cy="812.7" r="3.8" fill="#6bb8d3"/>
<circle cx="1300.2" cy="872.4" r="3.8" fill="#6bb8d3"/>
<circle cx="1415.3" cy="895.4" r="3.8" fill="#6bb8d3"/>
<circle cx="1530.4" cy="882.3" r="3.8" fill="#6bb8d3"/>
<circle cx="1645.5" cy="852.9" r="3.8" fill="#6bb8d3"/>
<circle cx="1760.6" cy="691" r="3.8" fill="#6bb8d3"/>
<g transform="translate(0,711.40) rotate(-90)"><text x="-1.07" y="845.60" font-family="Liberation Mono" font-weight="normal" font-size="17.16" fill="#4a4a4a" textLength="17.69" lengthAdjust="spacingAndGlyphs" >15</text>
<text x="19.90" y="845.60" font-family="Liberation Mono" font-weight="normal" font-size="17.16" fill="#4a4a4a" textLength="26.53" lengthAdjust="spacingAndGlyphs" >093</text>
<text x="49.70" y="845.60" font-family="Liberation Mono" font-weight="normal" font-size="17.16" fill="#4a4a4a" textLength="26.53" lengthAdjust="spacingAndGlyphs" >005</text></g>
<g transform="translate(0,705.60) rotate(-90)"><text x="-1.07" y="960.74" font-family="Liberation Mono" font-weight="normal" font-size="17.16" fill="#4a4a4a" textLength="17.69" lengthAdjust="spacingAndGlyphs" >15</text>
<text x="19.90" y="960.74" font-family="Liberation Mono" font-weight="normal" font-size="17.16" fill="#4a4a4a" textLength="26.53" lengthAdjust="spacingAndGlyphs" >366</text>
<text x="49.70" y="960.74" font-family="Liberation Mono" font-weight="normal" font-size="17.16" fill="#4a4a4a" textLength="26.53" lengthAdjust="spacingAndGlyphs" >115</text></g>
<g transform="translate(0,714.50) rotate(-90)"><text x="-1.06" y="1075.88" font-family="Liberation Mono" font-weight="normal" font-size="17.16" fill="#4a4a4a" textLength="17.65" lengthAdjust="spacingAndGlyphs" >14</text>
<text x="19.85" y="1075.88" font-family="Liberation Mono" font-weight="normal" font-size="17.16" fill="#4a4a4a" textLength="26.47" lengthAdjust="spacingAndGlyphs" >937</text>
<text x="49.58" y="1075.88" font-family="Liberation Mono" font-weight="normal" font-size="17.16" fill="#4a4a4a" textLength="26.47" lengthAdjust="spacingAndGlyphs" >154</text></g>
<g transform="translate(0,703.10) rotate(-90)"><text x="-1.07" y="1191.02" font-family="Liberation Mono" font-weight="normal" font-size="17.16" fill="#4a4a4a" textLength="17.69" lengthAdjust="spacingAndGlyphs" >15</text>
<text x="19.90" y="1191.02" font-family="Liberation Mono" font-weight="normal" font-size="17.16" fill="#4a4a4a" textLength="26.54" lengthAdjust="spacingAndGlyphs" >489</text>
<text x="49.72" y="1191.02" font-family="Liberation Mono" font-weight="normal" font-size="17.16" fill="#4a4a4a" textLength="26.54" lengthAdjust="spacingAndGlyphs" >956</text></g>
<rect x="1288.26" y="698.80" width="24.5" height="82.7" rx="2.5" fill="#c0dae1"/>
<g transform="translate(0,776.80) rotate(-90)"><text x="-1.07" y="1306.46" font-family="Liberation Mono" font-weight="normal" font-size="16.85" fill="#555555" textLength="17.69" lengthAdjust="spacingAndGlyphs" >16</text>
<text x="19.90" y="1306.46" font-family="Liberation Mono" font-weight="normal" font-size="16.85" fill="#555555" textLength="26.53" lengthAdjust="spacingAndGlyphs" >140</text>
<text x="49.70" y="1306.46" font-family="Liberation Mono" font-weight="normal" font-size="16.85" fill="#555555" textLength="26.53" lengthAdjust="spacingAndGlyphs" >443</text></g>
<rect x="1403.40" y="687.00" width="24.5" height="82.7" rx="2.5" fill="#c0dae1"/>
<g transform="translate(0,765.00) rotate(-90)"><text x="-1.07" y="1421.60" font-family="Liberation Mono" font-weight="normal" font-size="16.85" fill="#555555" textLength="17.71" lengthAdjust="spacingAndGlyphs" >16</text>
<text x="19.92" y="1421.60" font-family="Liberation Mono" font-weight="normal" font-size="16.85" fill="#555555" textLength="26.56" lengthAdjust="spacingAndGlyphs" >704</text>
<text x="49.76" y="1421.60" font-family="Liberation Mono" font-weight="normal" font-size="16.85" fill="#555555" textLength="26.56" lengthAdjust="spacingAndGlyphs" >129</text></g>
<rect x="1518.54" y="685.70" width="24.5" height="82.7" rx="2.5" fill="#c0dae1"/>
<g transform="translate(0,763.70) rotate(-90)"><text x="-1.06" y="1536.74" font-family="Liberation Mono" font-weight="normal" font-size="16.85" fill="#555555" textLength="17.64" lengthAdjust="spacingAndGlyphs" >16</text>
<text x="19.84" y="1536.74" font-family="Liberation Mono" font-weight="normal" font-size="16.85" fill="#555555" textLength="26.46" lengthAdjust="spacingAndGlyphs" >765</text>
<text x="49.56" y="1536.74" font-family="Liberation Mono" font-weight="normal" font-size="16.85" fill="#555555" textLength="26.46" lengthAdjust="spacingAndGlyphs" >311</text></g>
<rect x="1633.68" y="684.90" width="24.5" height="82.7" rx="2.5" fill="#c0dae1"/>
<g transform="translate(0,762.90) rotate(-90)"><text x="-1.07" y="1651.88" font-family="Liberation Mono" font-weight="normal" font-size="16.85" fill="#555555" textLength="17.71" lengthAdjust="spacingAndGlyphs" >16</text>
<text x="19.92" y="1651.88" font-family="Liberation Mono" font-weight="normal" font-size="16.85" fill="#555555" textLength="26.57" lengthAdjust="spacingAndGlyphs" >799</text>
<text x="49.77" y="1651.88" font-family="Liberation Mono" font-weight="normal" font-size="16.85" fill="#555555" textLength="26.57" lengthAdjust="spacingAndGlyphs" >712</text></g>
<g transform="translate(0,867.90) rotate(-90)"><text x="-1.14" y="1766.72" font-family="Liberation Mono" font-weight="normal" font-size="17.16" fill="#4a4a4a" textLength="8.83" lengthAdjust="spacingAndGlyphs" >7</text>
<text x="10.97" y="1766.72" font-family="Liberation Mono" font-weight="normal" font-size="17.16" fill="#4a4a4a" textLength="26.50" lengthAdjust="spacingAndGlyphs" >657</text>
<text x="40.73" y="1766.72" font-family="Liberation Mono" font-weight="normal" font-size="17.16" fill="#4a4a4a" textLength="26.50" lengthAdjust="spacingAndGlyphs" >743</text></g>
<text x="822.70" y="696.10" font-family="Liberation Mono" font-weight="normal" font-size="17.46" fill="#4a4a4a" textLength="34.49" lengthAdjust="spacingAndGlyphs" >3,7%</text>
<text x="937.30" y="714.50" font-family="Liberation Mono" font-weight="normal" font-size="17.46" fill="#4a4a4a" textLength="34.49" lengthAdjust="spacingAndGlyphs" >3,6%</text>
<text x="1052.30" y="737.80" font-family="Liberation Mono" font-weight="normal" font-size="17.46" fill="#4a4a4a" textLength="34.49" lengthAdjust="spacingAndGlyphs" >3,5%</text>
<text x="1186.40" y="804.00" font-family="Liberation Mono" font-weight="normal" font-size="17.46" fill="#4a4a4a" textLength="34.49" lengthAdjust="spacingAndGlyphs" >3,3%</text>
<text x="1302.10" y="863.00" font-family="Liberation Mono" font-weight="normal" font-size="17.46" fill="#4a4a4a" textLength="34.49" lengthAdjust="spacingAndGlyphs" >3,1%</text>
<text x="1397.80" y="918.00" font-family="Liberation Mono" font-weight="normal" font-size="17.46" fill="#4a4a4a" textLength="34.49" lengthAdjust="spacingAndGlyphs" >3,0%</text>
<text x="1512.90" y="873.00" font-family="Liberation Mono" font-weight="normal" font-size="17.46" fill="#4a4a4a" textLength="34.49" lengthAdjust="spacingAndGlyphs" >3,0%</text>
<text x="1609.10" y="843.50" font-family="Liberation Mono" font-weight="normal" font-size="17.46" fill="#4a4a4a" textLength="34.49" lengthAdjust="spacingAndGlyphs" >3,2%</text>
<text x="1743.80" y="682.50" font-family="Liberation Mono" font-weight="normal" font-size="17.46" fill="#4a4a4a" textLength="34.49" lengthAdjust="spacingAndGlyphs" >3,7%</text>
</svg>
</body></html>
